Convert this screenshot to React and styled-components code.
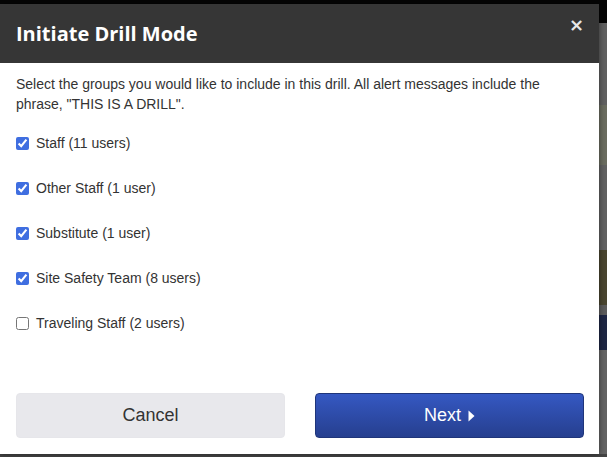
import React from "react";
import styled, { createGlobalStyle } from "styled-components";

const GlobalStyle = createGlobalStyle`
  html, body {
    margin: 0;
    padding: 0;
    height: 100%;
    overflow: hidden;
  }
  body {
    font-family: "Liberation Sans", Arial, sans-serif;
  }
`;

const Backdrop = styled.div`
  width: 607px;
  height: 457px;
  background: linear-gradient(
    to bottom,
    #050505 0px,
    #050505 23px,
    #616161 23px,
    #616161 105px,
    #6b6d60 105px,
    #6b6d60 165px,
    #626262 165px,
    #626262 250px,
    #4a4630 250px,
    #4a4630 305px,
    #5c5c5c 305px,
    #5c5c5c 315px,
    #1e2744 315px,
    #1e2744 350px,
    #646464 350px,
    #646464 454px,
    #444 454px
  );
  padding-top: 4px;
  box-sizing: border-box;
`;

const Modal = styled.div`
  width: 599px;
  height: 450px;
  background: #fff;
  display: flex;
  flex-direction: column;
  box-shadow: 0 0 6px rgba(0, 0, 0, 0.5);
`;

const Header = styled.div`
  height: 59px;
  background: #363636;
  display: flex;
  align-items: flex-start;
  justify-content: space-between;
  padding: 0 15px 0 16px;
  box-sizing: border-box;
`;

const Title = styled.h2`
  margin: 0;
  padding-top: 16px;
  font-family: "Open Sans", "Noto Sans", sans-serif;
  font-weight: 700;
  font-size: 20px;
  line-height: 28px;
  color: #fff;
`;

const Close = styled.button`
  border: 0;
  background: none;
  padding: 0;
  margin-top: 11px;
  color: #e8e8e8;
  font-family: "DejaVu Sans", sans-serif;
  font-weight: 700;
  font-size: 18px;
  line-height: 20px;
  cursor: pointer;
`;

const Body = styled.div`
  flex: 1;
  padding: 12px 16px 0 16px;
  display: flex;
  flex-direction: column;
`;

const Intro = styled.p`
  margin: 0 0 21px;
  font-size: 14px;
  line-height: 19.5px;
  color: #333;
`;

const GroupList = styled.div`
  display: flex;
  flex-direction: column;
  gap: 29px;
`;

const Option = styled.label`
  display: flex;
  align-items: center;
  gap: 7px;
  font-size: 14px;
  line-height: 16px;
  color: #333;
  cursor: pointer;
`;

const Box = styled.input`
  margin: 0;
  width: 13px;
  height: 13px;
  accent-color: #3f6ee0;
`;

const Footer = styled.div`
  display: flex;
  gap: 30px;
  padding: 0 15px 16px 16px;
`;

const Button = styled.button`
  flex: 1;
  height: 45px;
  border-radius: 4px;
  font-family: "Liberation Sans", Arial, sans-serif;
  font-size: 18px;
  display: flex;
  align-items: center;
  justify-content: center;
  gap: 7px;
  cursor: pointer;
  border: 1px solid ${(p) => (p.primary ? "#1f357a" : "#e6e6ea")};
  background: ${(p) =>
    p.primary ? "linear-gradient(to bottom, #3558c2, #263f8f)" : "#e8e8ec"};
  color: ${(p) => (p.primary ? "#fff" : "#333")};
`;

const groups = [
  { name: "Staff (11 users)", checked: true },
  { name: "Other Staff (1 user)", checked: true },
  { name: "Substitute (1 user)", checked: true },
  { name: "Site Safety Team (8 users)", checked: true },
  { name: "Traveling Staff (2 users)", checked: false },
];

export default function App() {
  return (
    <>
      <GlobalStyle />
      <Backdrop>
        <Modal>
          <Header>
            <Title>Initiate Drill Mode</Title>
            <Close aria-label="Close">×</Close>
          </Header>
          <Body>
            <Intro>
              Select the groups you would like to include in this drill. All
              alert messages include the phrase, "THIS IS A DRILL".
            </Intro>
            <GroupList>
              {groups.map((g) => (
                <Option key={g.name}>
                  <Box type="checkbox" defaultChecked={g.checked} />
                  {g.name}
                </Option>
              ))}
            </GroupList>
          </Body>
          <Footer>
            <Button>Cancel</Button>
            <Button primary>
              Next
              <svg width="7" height="12" viewBox="0 0 7 12">
                <path d="M0.5 0.5 L6.5 6 L0.5 11.5 Z" fill="#fff" />
              </svg>
            </Button>
          </Footer>
        </Modal>
      </Backdrop>
    </>
  );
}
